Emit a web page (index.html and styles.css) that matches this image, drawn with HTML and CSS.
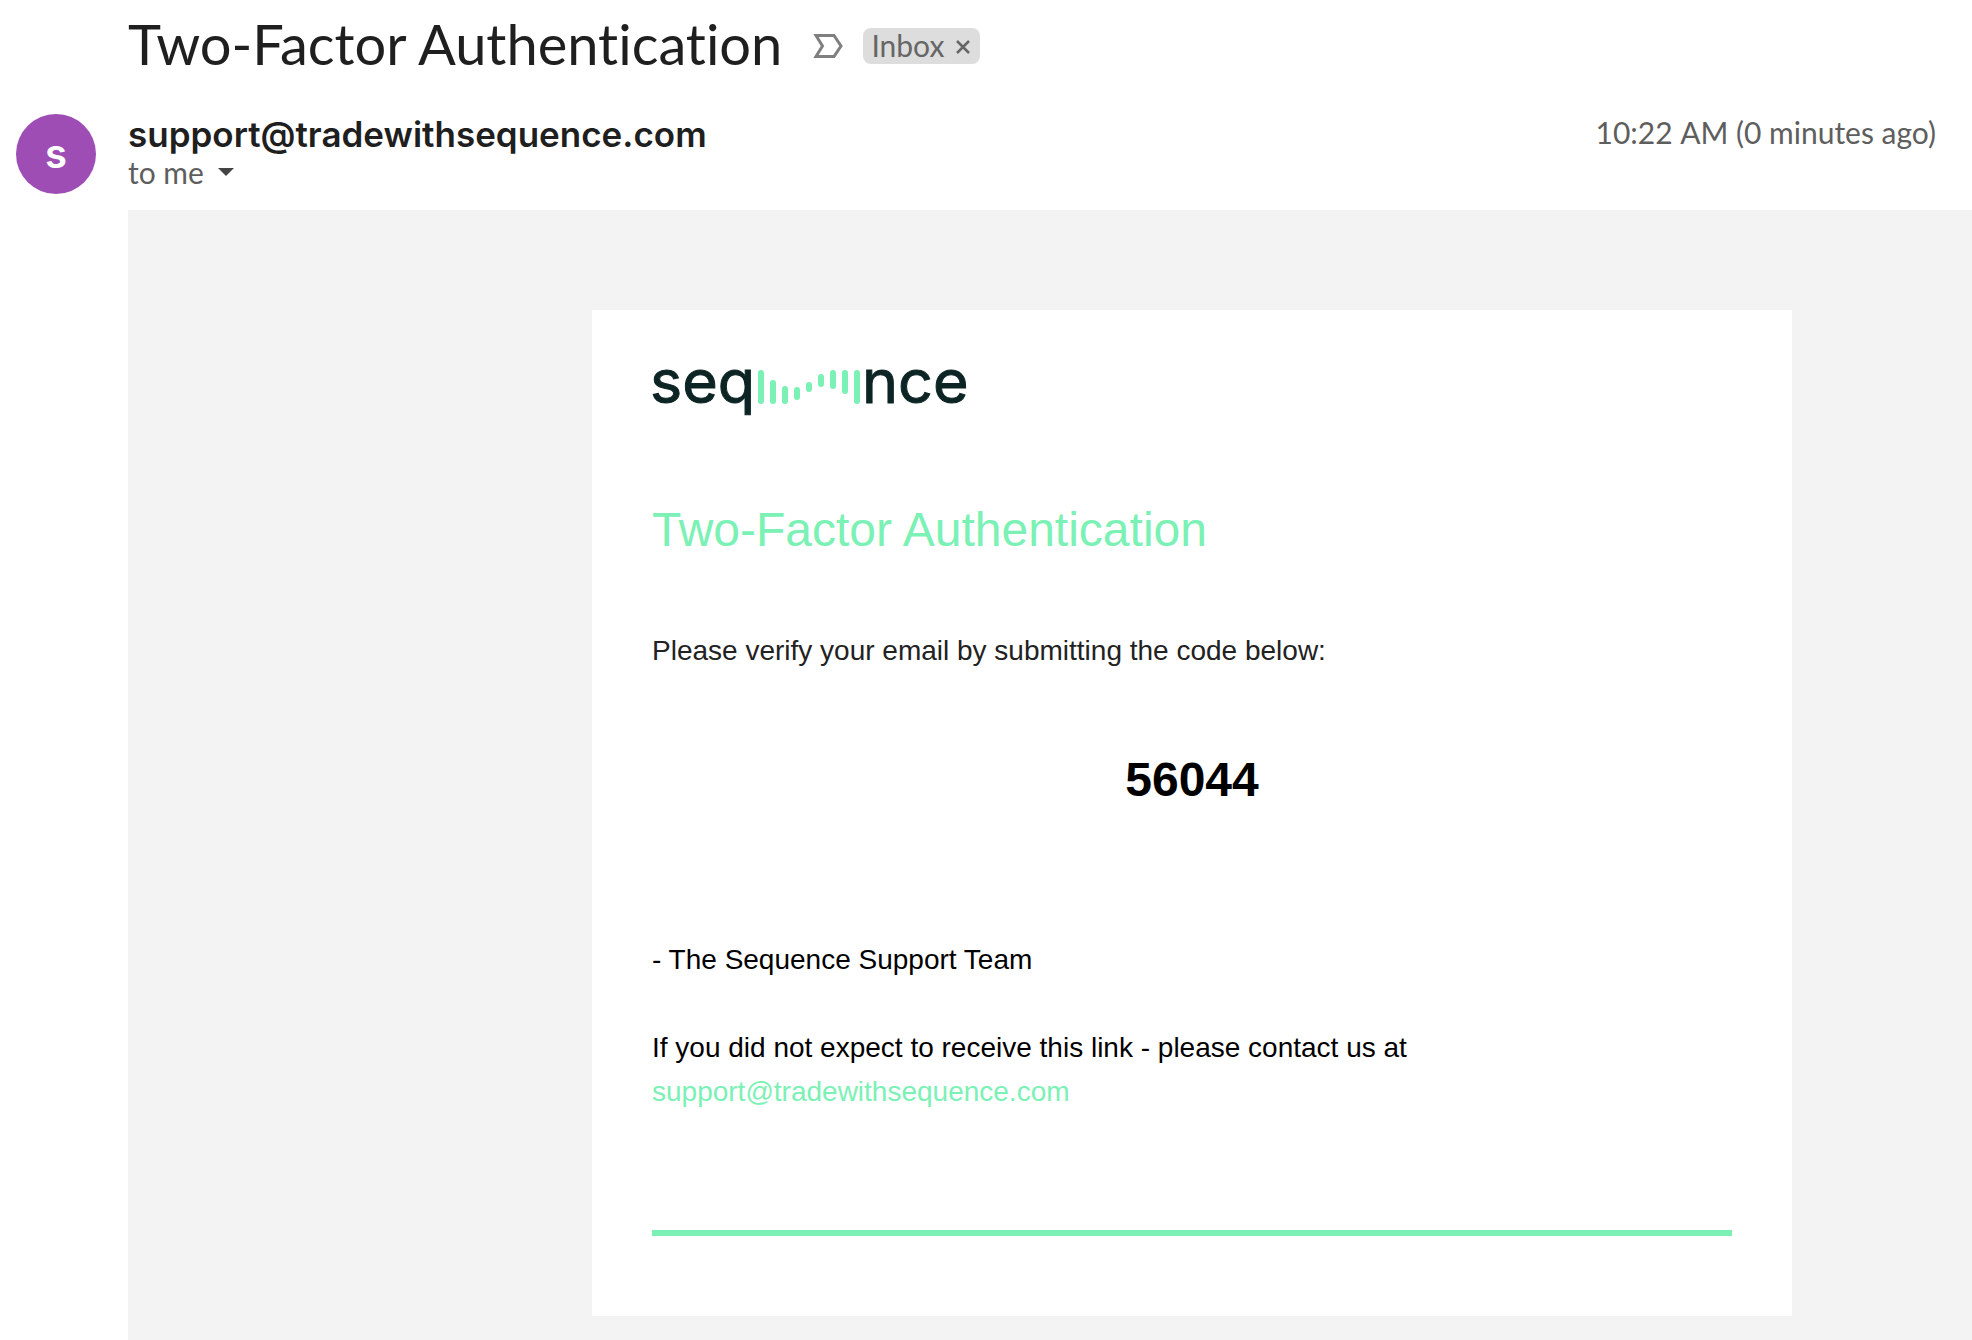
FILE: index.html
```html
<!DOCTYPE html>
<html lang="en">
<head>
  <meta charset="UTF-8">
  <meta name="viewport" content="width=device-width, initial-scale=1.0">
  <title>Two-Factor Authentication</title>
  <link rel="stylesheet" href="styles.css">
</head>
<body>

<header class="subject">
  <h1 class="subject-title">Two-Factor Authentication</h1>
  <button class="icon-btn" aria-label="Mark as important">
    <svg width="30" height="24" viewBox="0 0 30 24">
      <path d="M3 1.500H21L28 12L21 22.500H3L9.500 12Z" fill="none" stroke="#7f7f7f" stroke-width="3"/>
    </svg>
  </button>
  <div class="chip">
    <span>Inbox</span>
    <button class="icon-btn" aria-label="Remove label Inbox">
      <svg width="14" height="14" viewBox="0 0 14 14">
        <path d="M1 1L13 13M13 1L1 13" stroke="#666" stroke-width="2.500"/>
      </svg>
    </button>
  </div>
</header>

<section class="sender">
  <div class="avatar">s</div>
  <div class="sender-info">
    <div class="sender-email">support@tradewithsequence.com</div>
    <div class="recipient">
      <span>to me</span>
      <button class="icon-btn" aria-label="Show details">
        <svg width="16" height="8" viewBox="0 0 16 8">
          <path d="M0 0H16L8 8Z" fill="#444"/>
        </svg>
      </button>
    </div>
  </div>
  <time class="sent-time">10:22&#8239;AM (0 minutes ago)</time>
</section>

<main class="message">
  <article class="card">
    <svg class="logo" width="320" height="60" viewBox="0 0 320 60" role="img" aria-label="sequence">
      <text class="logo-text" x="-2" y="43">seq</text>
      <g fill="#7bf1b5">
        <rect x="106" y="10" width="6" height="34" rx="3"/>
        <rect x="118" y="20" width="6" height="24" rx="3"/>
        <rect x="130" y="26" width="6" height="18" rx="3"/>
        <rect x="142" y="27" width="6" height="13" rx="3"/>
        <rect x="154" y="22" width="6" height="10" rx="3"/>
        <rect x="166" y="14" width="6" height="13" rx="3"/>
        <rect x="178" y="10" width="6" height="19" rx="3"/>
        <rect x="190" y="10" width="6" height="24" rx="3"/>
        <rect x="202" y="10" width="6" height="34" rx="3"/>
      </g>
      <text class="logo-text" x="210" y="43">nce</text>
    </svg>
    <h2 class="card-title">Two-Factor Authentication</h2>
    <p class="intro">Please verify your email by submitting the code below:</p>
    <p class="code">56044</p>
    <p class="signature">- The Sequence Support Team</p>
    <p class="contact">
      If you did not expect to receive this link - please contact us at<br>
      <a href="mailto:support@tradewithsequence.com">support@tradewithsequence.com</a>
    </p>
    <hr class="rule">
  </article>
</main>

</body>
</html>
```
FILE: styles.css
```css
* {
  box-sizing: border-box;
}

body {
  margin: 0;
  min-height: 100vh;
  display: flex;
  flex-direction: column;
  font-family: "Lato", sans-serif;
  font-variant-ligatures: none;
  color: #1f1f1f;
  background-color: #fff;
}

h1,
h2,
p {
  margin: 0;
}

.icon-btn {
  display: flex;
  padding: 0;
  border: none;
  background: none;
  cursor: pointer;
}

.subject {
  display: flex;
  align-items: center;
  height: 92px;
  padding-left: 128px;
}

.subject-title {
  padding-bottom: 4px;
  font-size: 56px;
  font-weight: 400;
  line-height: 84px;
}

.subject .icon-btn {
  margin-left: 31px;
}

.chip {
  display: flex;
  align-items: center;
  height: 36px;
  margin-left: 20px;
  padding: 0 10px 0 8px;
  border-radius: 8px;
  background-color: #ddd;
  color: #666;
  font-size: 30px;
  line-height: 32px;
}

.chip span {
  padding-bottom: 2px;
}

.subject .chip .icon-btn {
  margin: 2px 0 0 12px;
}

.sender {
  display: flex;
  height: 118px;
  padding: 22px 36px 0 16px;
}

.avatar {
  width: 80px;
  height: 80px;
  margin-right: 32px;
  border-radius: 50%;
  background-color: #9e4db5;
  color: #fff;
  font-family: "Inter", sans-serif;
  font-size: 40px;
  font-weight: 600;
  line-height: 80px;
  text-align: center;
}

.sender-info {
  flex: 1;
}

.sender-email {
  font-family: "Inter", sans-serif;
  font-size: 35px;
  font-weight: 600;
  line-height: 40px;
}

.recipient {
  display: flex;
  align-items: center;
  gap: 14px;
  color: #5e5e5e;
  font-size: 30px;
  line-height: 36px;
}

.sent-time {
  color: #5e5e5e;
  font-size: 30px;
  line-height: 36px;
}

.message {
  flex: 1;
  margin-left: 128px;
  padding: 100px 180px 24px 464px;
  background-color: #f3f3f3;
  font-family: "Liberation Sans", Arial, sans-serif;
}

.card {
  padding: 50px 60px 80px;
  background-color: #fff;
  color: #000;
  font-size: 28px;
  line-height: 44px;
}

.logo {
  display: block;
  overflow: visible;
}

.logo-text {
  font-family: "Inter", sans-serif;
  font-size: 61px;
  fill: #0d2424;
  stroke: #0d2424;
}

.card-title {
  margin-top: 80px;
  color: #7bf1b5;
  font-size: 48px;
  font-weight: 400;
  line-height: 60px;
}

.intro {
  margin-top: 69px;
  color: #222;
}

.code {
  margin-top: 77px;
  font-size: 48px;
  font-weight: 700;
  line-height: 60px;
  text-align: center;
}

.signature {
  margin-top: 128px;
}

.contact {
  margin-top: 44px;
}

.contact a {
  color: #7bf1b5;
  text-decoration: none;
}

.rule {
  height: 6px;
  margin: 116px 0 0;
  border: none;
  background-color: #7bf1b5;
}
```
